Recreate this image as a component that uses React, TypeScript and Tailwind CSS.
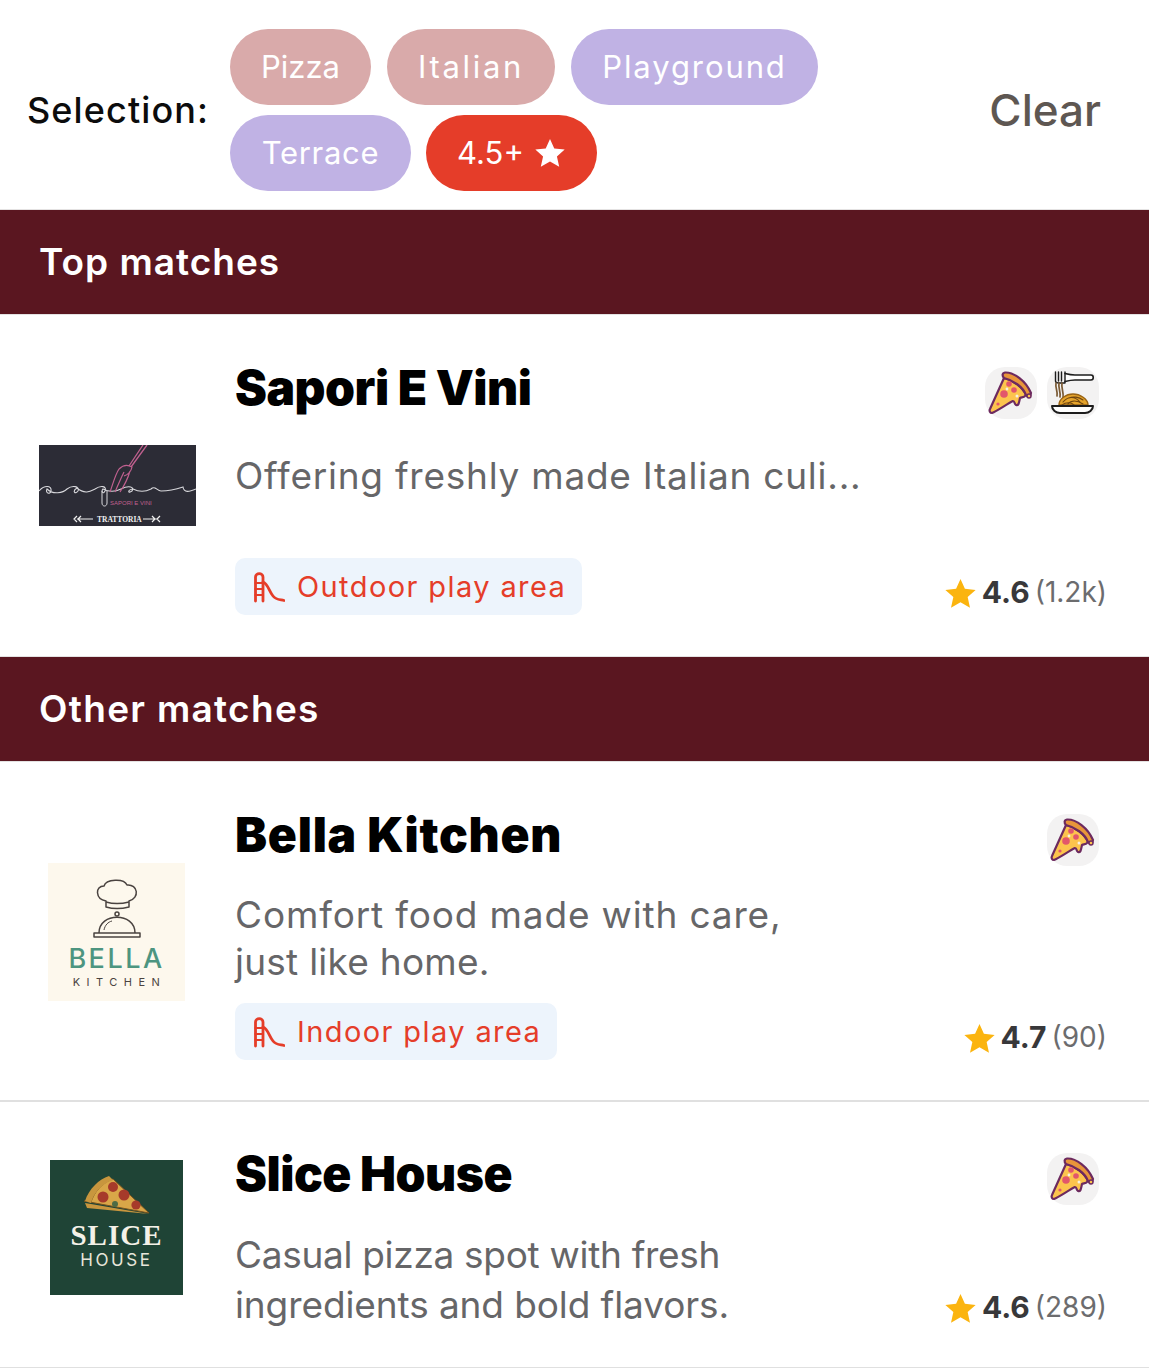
import React from "react";

const FONT = "font-['Inter','Noto_Sans',sans-serif]";

function PizzaIcon() {
  return (
    <svg width="52" height="52" viewBox="0 0 52 52" fill="none" stroke="#6d2a5f" strokeWidth="2.2" strokeLinejoin="round">
      <path d="M19 11 C28 13 38 20 41 28 C39 31 37 30 35 31 C34 35 34 39 31 38 C29 37 30 34 28 34 C22 37 12 44 7 46 C5 46 4 44 5 42 Z" fill="#fcc44d" />
      <path d="M20 5.5 C29 5 41 14 46 26 C46 29 43 31 41 28 C38 20 28 13 19 11 C17 9 17 6 20 5.5 Z" fill="#e8953a" />
      <circle cx="24" cy="17" r="2.8" fill="#e2566b" stroke="none" />
      <circle cx="19" cy="27" r="3.8" fill="#e2566b" stroke="none" />
      <circle cx="29" cy="23" r="2.8" fill="#e2566b" stroke="none" />
      <circle cx="32" cy="29" r="1.5" fill="#f7efe2" stroke="none" />
      <circle cx="22" cy="22" r="1.4" fill="#f7efe2" stroke="none" />
      <circle cx="13" cy="37" r="1.6" fill="#e2566b" stroke="none" />
      <circle cx="44" cy="29" r="2" fill="#fcc44d" strokeWidth="1.4" />
    </svg>
  );
}

function PastaIcon() {
  return (
    <svg width="52" height="52" viewBox="0 0 52 52" fill="none" stroke="#1d1d1d" strokeLinecap="round" strokeLinejoin="round">
      <path d="M18 6.5 C22 7.5 24 8 28 8 H44 C47 8 47 13 44 13 H28 C24 13 22 13.5 18 14.5" strokeWidth="1.6" fill="#fff" />
      <path d="M8.5 5 V14 C8.5 15 10 16 12 16 H18 V5 M11.5 5 V14 M14.5 5 V14" strokeWidth="1.4" />
      <path d="M9 16 C8 21 11 24 10 29 M12 16 C11 21 14 25 13 30 M15 16 C14 21 17 25 16 31" stroke="#7a5a34" strokeWidth="1.7" />
      <path d="M12 38 C12 32 19 27 26 27 C33 27 41 32 41 38 Z" fill="#e5a42c" strokeWidth="1.4" stroke="#9a6414" />
      <path d="M16 35 C21 29 28 29 33 35 M21 37 C24 33 30 33 36 37 M15 38 C19 35 24 35 27 38 M22 31 C26 29 32 30 36 33" stroke="#6e4510" strokeWidth="1.1" />
      <path d="M5 39 H46 C46 43 42 46 38 46 H13 C9 46 5 43 5 39 Z" fill="#fff" strokeWidth="2" />
    </svg>
  );
}

function SlideIcon() {
  return (
    <svg width="32" height="32" viewBox="0 0 32 32" fill="none" stroke="#e53d29" strokeWidth="2.8" strokeLinecap="round" strokeLinejoin="round">
      <path d="M2.5 30 V6 C2.5 1.5 10 1.5 10 6 V30" />
      <path d="M2.5 12 H10 M2.5 18 H10 M2.5 24 H10" strokeWidth="2.2" />
      <path d="M10 11 C15 13 16 20 20 25 C23 29 27 28.5 31 29.5" />
    </svg>
  );
}

function SaporiLogo() {
  return (
    <div className="relative w-[157px] h-[81px] ml-[39px] bg-[#2c2c36] overflow-hidden shrink-0">
      <svg width="157" height="81" viewBox="0 0 157 81" fill="none" className="absolute inset-0">
        <path d="M0 46 C5 40 13 40 12 46 C11 50 6 48 8 44 C14 50 24 48 28 44 C33 40 41 41 39 46 C36 50 33 46 38 43 C46 50 52 46 56 44 C62 40 68 41 66 46 C64 50 62 46 64 44 C72 48 78 46 82 44 C90 40 96 42 93 46 C89 49 88 45 94 44 C102 48 108 46 112 44 C116 40 118 46 122 46 C130 46 138 44 144 42 C145 48 150 47 157 44" stroke="#d8d8dc" strokeWidth="1.1" />
        <path d="M63 46 V58 C63 62 68 62 68 58 V46" stroke="#d8d8dc" strokeWidth="1" />
        <path d="M108 0 L92 22 M104 0 L90 21" stroke="#c0608f" strokeWidth="1.3" />
        <path d="M80 24 C83 21 88 19 93 22 C92 27 88 30 85 31 M71 47 C74 39 76 30 80 24 M76 47 C79 40 82 33 85 27 M81 47 C85 41 89 33 91 26" stroke="#c0608f" strokeWidth="1.2" />
        <path d="M38 74 H54 M38 71 L35 74 L38 77 M42 71 L39 74 L42 77 M104 74 H118 M118 74 L121 71 M118 74 L121 77 M113 71 L116 74 L113 77" stroke="#f0f0f0" strokeWidth="1.2" />
      </svg>
      <span className="absolute left-[71px] top-[54px] text-[6px] leading-[8px] font-['Liberation_Sans',sans-serif] text-[#c0608f] whitespace-nowrap">SAPORI E VINI</span>
      <span className="absolute left-[58px] top-[70px] text-[7.5px] leading-[9px] font-bold font-['Liberation_Serif',serif] text-[#f0f0f0] whitespace-nowrap">TRATTORIA</span>
    </div>
  );
}

function BellaLogo() {
  return (
    <div className="w-[137px] h-[138px] ml-[48px] bg-[#fdf8ed] flex flex-col items-center pt-4 shrink-0">
      <svg width="48" height="60" viewBox="0 0 48 60" fill="none" stroke="#4a4340" strokeWidth="1.5" strokeLinejoin="round">
        <path d="M13 22 C2 20 2 7 11 7 C13 0 31 -1 34 6 C45 5 47 19 36 22 V28 C28 30 20 30 13 28 Z" />
        <path d="M13 23 C20 25 28 25 36 23" />
        <path d="M6 54 C6 33 42 33 42 54" />
        <circle cx="24" cy="35" r="2" />
        <path d="M1 54 H47 V58 H1 Z" />
        <path d="M11 51 C12 46 15 43 19 42" strokeWidth="1" />
      </svg>
      <span className="mt-[6px] text-[27px] leading-[28px] font-medium tracking-[2.5px] text-[#4d9580] font-['Inter',sans-serif]">BELLA</span>
      <span className="mt-[3px] text-[11px] leading-[12px] tracking-[6.5px] pl-[6px] text-[#4a4340] font-['Inter',sans-serif]">KITCHEN</span>
    </div>
  );
}

function SliceLogo() {
  return (
    <div className="w-[133px] h-[135px] ml-[50px] mb-[17px] bg-[#1f4436] flex flex-col items-center pt-[15px] shrink-0">
      <svg width="68" height="42" viewBox="0 0 68 42" fill="none">
        <path d="M1 26 L66 38 L30 4 C18 8 11 18 8 27 Z" fill="#d9a648" stroke="#7a5520" strokeWidth="1" />
        <path d="M2 26 C6 14 16 4 26 1 L30 5 C18 9 11 18 8 28 Z" fill="#c8963e" />
        <path d="M2 28 L4 33 L66 39 L8 29 Z" fill="#c8963e" />
        <circle cx="30" cy="12" r="5" fill="#a63a2a" />
        <circle cx="20" cy="22" r="5.5" fill="#a63a2a" />
        <circle cx="41" cy="20" r="5.5" fill="#a63a2a" />
        <circle cx="53" cy="30" r="4.6" fill="#a63a2a" />
        <circle cx="32" cy="29" r="3" fill="#4e6b45" />
      </svg>
      <span className="mt-[2px] text-[29px] leading-[32px] font-bold tracking-[1px] text-[#f4f1e8] font-['Liberation_Serif',serif]">SLICE</span>
      <span className="text-[17px] leading-[19px] tracking-[2.6px] text-[#e8e6da] font-['Inter',sans-serif]">HOUSE</span>
    </div>
  );
}

function CuisineBadge({ children }: { children: React.ReactNode }) {
  return <div className="w-[52px] h-[52px] rounded-[20px] bg-[#f3f2f2] flex items-center justify-center">{children}</div>;
}

function Rating({ score, count }: { score: string; count: string }) {
  return (
    <div className="flex items-center shrink-0 mb-[5px] font-['Inter',sans-serif] text-[30px] leading-[36px]">
      <svg width="33" height="33" viewBox="0 0 24 24" className="mr-[5px] mt-[2px]">
        <path d="M12 1.5 L15.2 8.6 L23 9.4 L17.2 14.6 L18.9 22.3 L12 18.3 L5.1 22.3 L6.8 14.6 L1 9.4 L8.8 8.6 Z" fill="#fbb40f" />
      </svg>
      <span className="font-bold text-[#38383a]">{score}</span>
      <span className="ml-[5px] text-[#6c6c6e] text-[28px]">({count})</span>
    </div>
  );
}

function PlayTag({ label }: { label: string }) {
  return (
    <div className="h-[57px] w-fit rounded-[10px] bg-[#edf4fc] flex items-center pl-[18px] pr-[16px] gap-[12px] text-[#e53d29] text-[29px] tracking-[1.4px]">
      <SlideIcon />
      <span className="leading-none">{label}</span>
    </div>
  );
}

function Banner({ title, className }: { title: string; className: string }) {
  return (
    <div className={`h-[106px] bg-[#5a1620] border-y border-[#e4e2e2] flex items-center pl-[39px] text-white text-[37px] font-semibold ${className}`}>
      {title}
    </div>
  );
}

function Chip({ label, className }: { label: string; className: string }) {
  return (
    <div className={`h-[76px] rounded-full flex items-center justify-center text-white text-[31px] ${className}`}>
      {label}
    </div>
  );
}

interface CardProps {
  logo: React.ReactNode;
  name: string;
  nameClass: string;
  desc: string[];
  descClass: string;
  lastLineClass?: string;
  tag?: string;
  badges: React.ReactNode[];
  score: string;
  count: string;
  cardClass: string;
}

function Card({ logo, name, nameClass, desc, descClass, lastLineClass, tag, badges, score, count, cardClass }: CardProps) {
  return (
    <div className={`flex bg-white ${cardClass}`}>
      <div className="w-[235px] shrink-0 flex items-center">{logo}</div>
      <div className="flex-1 pr-[42px] flex flex-col h-full">
        <div className="flex justify-between items-start">
          <div className={`text-[48px] leading-[64px] font-black text-black ${nameClass}`}>{name}</div>
          <div className="flex gap-[10px] mr-[8px] mt-[11px]">{badges}</div>
        </div>
        <div className="flex-1 flex justify-between">
          <div className="flex flex-col justify-between">
            <div className={`text-[37px] text-[#666668] ${descClass}`}>
              {desc.map((line, i) => (
                <div key={line} className={i > 0 ? lastLineClass : undefined}>{line}</div>
              ))}
            </div>
            {tag && <PlayTag label={tag} />}
          </div>
          <div className="self-end">
            <Rating score={score} count={count} />
          </div>
        </div>
      </div>
    </div>
  );
}

export default function App() {
  return (
    <div className={`w-[1149px] h-[1368px] bg-white overflow-hidden ${FONT}`}>
      <div className="h-[209px] flex items-center pt-[11px] pl-[27px] pr-[48px]">
        <div className="text-[36px] font-medium text-[#0c0c0c] tracking-[1.1px] w-[203px] shrink-0">Selection:</div>
        <div className="flex flex-wrap gap-x-4 gap-y-[10px] w-[600px]">
          <Chip label="Pizza" className="w-[141px] bg-[#d9aaaa]" />
          <Chip label="Italian" className="w-[168px] bg-[#d9aaaa] tracking-[2.7px]" />
          <Chip label="Playground" className="w-[247px] bg-[#c0b2e4] tracking-[1.9px]" />
          <Chip label="Terrace" className="w-[181px] bg-[#c0b2e4] tracking-[0.7px]" />
          <div className="h-[76px] w-[171px] -ml-px rounded-full flex items-center justify-center gap-[10px] text-white text-[31px] bg-[#e53d29]">
            4.5+
            <svg width="32" height="32" viewBox="0 0 24 24"><path d="M12 1.5 L15.2 8.6 L23 9.4 L17.2 14.6 L18.9 22.3 L12 18.3 L5.1 22.3 L6.8 14.6 L1 9.4 L8.8 8.6 Z" fill="#fff" /></svg>
          </div>
        </div>
        <div className="ml-auto text-[44px] font-medium text-[#5e5752]">Clear</div>
      </div>
      <Banner title="Top matches" className="tracking-[1px]" />
      <Card
        logo={<SaporiLogo />}
        name="Sapori E Vini"
        nameClass="tracking-[-0.5px]"
        desc={["Offering freshly made Italian culi..."]}
        descClass="mt-[32px] leading-[48px] tracking-[0.75px]"
        tag="Outdoor play area"
        badges={[<CuisineBadge key="p"><PizzaIcon /></CuisineBadge>, <CuisineBadge key="n"><PastaIcon /></CuisineBadge>]}
        score="4.6"
        count="1.2k"
        cardClass="h-[341px] pt-[41px] pb-[41px]"
      />
      <Banner title="Other matches" className="tracking-[1.3px]" />
      <Card
        logo={<BellaLogo />}
        name="Bella Kitchen"
        nameClass="tracking-[0.75px]"
        desc={["Comfort food made with care,", "just like home."]}
        descClass="mt-[24px] leading-[47px] tracking-[0.85px]"
        lastLineClass="tracking-[0.25px]"
        tag="Indoor play area"
        badges={[<CuisineBadge key="p"><PizzaIcon /></CuisineBadge>]}
        score="4.7"
        count="90"
        cardClass="h-[340px] pt-[41px] pb-[40px] border-b-2 border-[#e0e0e0]"
      />
      <Card
        logo={<SliceLogo />}
        name="Slice House"
        nameClass="tracking-[-0.5px]"
        desc={["Casual pizza spot with fresh", "ingredients and bold flavors."]}
        descClass="mt-[24px] leading-[50px] tracking-[-0.3px]"
        lastLineClass="tracking-[-0.1px]"
        badges={[<CuisineBadge key="p"><PizzaIcon /></CuisineBadge>]}
        score="4.6"
        count="289"
        cardClass="h-[266px] pt-[40px] pb-[37px] border-b border-[#e0e0e0]"
      />
    </div>
  );
}
